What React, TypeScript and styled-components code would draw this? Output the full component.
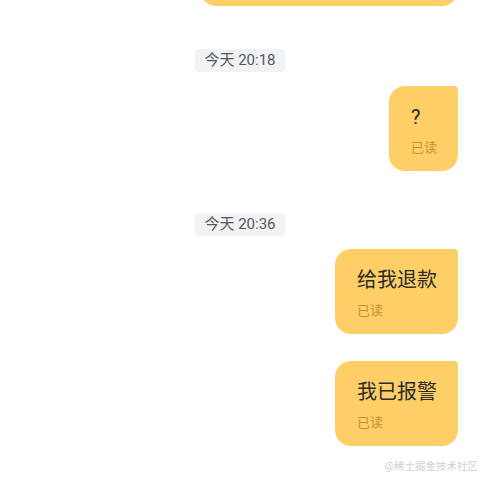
import React from "react";
import styled, { createGlobalStyle } from "styled-components";

const Global = createGlobalStyle`
  html, body { margin: 0; padding: 0; background: #ffffff; }
  body { font-family: Roboto, "Noto Sans CJK SC", "Noto Sans", sans-serif; }
  #root { width: 480px; height: 480px; overflow: hidden; position: relative; }
`;

const Page = styled.div`
  width: 480px;
  height: 480px;
  display: flex;
  flex-direction: column;
  align-items: stretch;
  box-sizing: border-box;
  padding-right: 22px;
  overflow: hidden;
  position: relative;
`;

const Row = styled.div<{ $gap: number }>`
  display: flex;
  justify-content: flex-end;
  margin-top: ${(p) => p.$gap}px;
`;

const Stamp = styled.div<{ $gap: number }>`
  align-self: center;
  margin-left: 22px;
  margin-top: ${(p) => p.$gap}px;
  height: 23px;
  padding: 0 9px;
  border-radius: 4px;
  background: #f1f2f4;
  color: #53585e;
  font-size: 15px;
  line-height: 23px;
  white-space: nowrap;
`;

const Bubble = styled.div`
  box-sizing: border-box;
  height: 85px;
  background: #fdcf66;
  border-radius: 16px 4px 16px 16px;
  padding: 17px 21px 0 22px;
  display: flex;
  flex-direction: column;
  gap: 8px;
`;

const Body = styled.div`
  font-size: 20px;
  line-height: 28px;
  color: #2b2b2b;
  white-space: nowrap;
`;

const Read = styled.div`
  font-size: 13px;
  line-height: 18px;
  color: #bf9433;
  white-space: nowrap;
`;

const TopBubble = styled.div`
  width: 258px;
  height: 60px;
  margin-top: -54px;
  background: #fdcf66;
  border-radius: 16px 4px 16px 16px;
`;

const Watermark = styled.div`
  position: absolute;
  right: 2px;
  bottom: 6px;
  font-size: 10.5px;
  line-height: 14px;
  color: #cfcfcf;
  white-space: nowrap;
`;

export default function App() {
  return (
    <>
      <Global />
      <Page>
        <Row $gap={0}>
          <TopBubble />
        </Row>
        <Stamp $gap={43}>今天 20:18</Stamp>
        <Row $gap={14}>
          <Bubble>
            <Body>?</Body>
            <Read>已读</Read>
          </Bubble>
        </Row>
        <Stamp $gap={42}>今天 20:36</Stamp>
        <Row $gap={13}>
          <Bubble>
            <Body>给我退款</Body>
            <Read>已读</Read>
          </Bubble>
        </Row>
        <Row $gap={27}>
          <Bubble>
            <Body>我已报警</Body>
            <Read>已读</Read>
          </Bubble>
        </Row>
        <Watermark>@稀土掘金技术社区</Watermark>
      </Page>
    </>
  );
}
